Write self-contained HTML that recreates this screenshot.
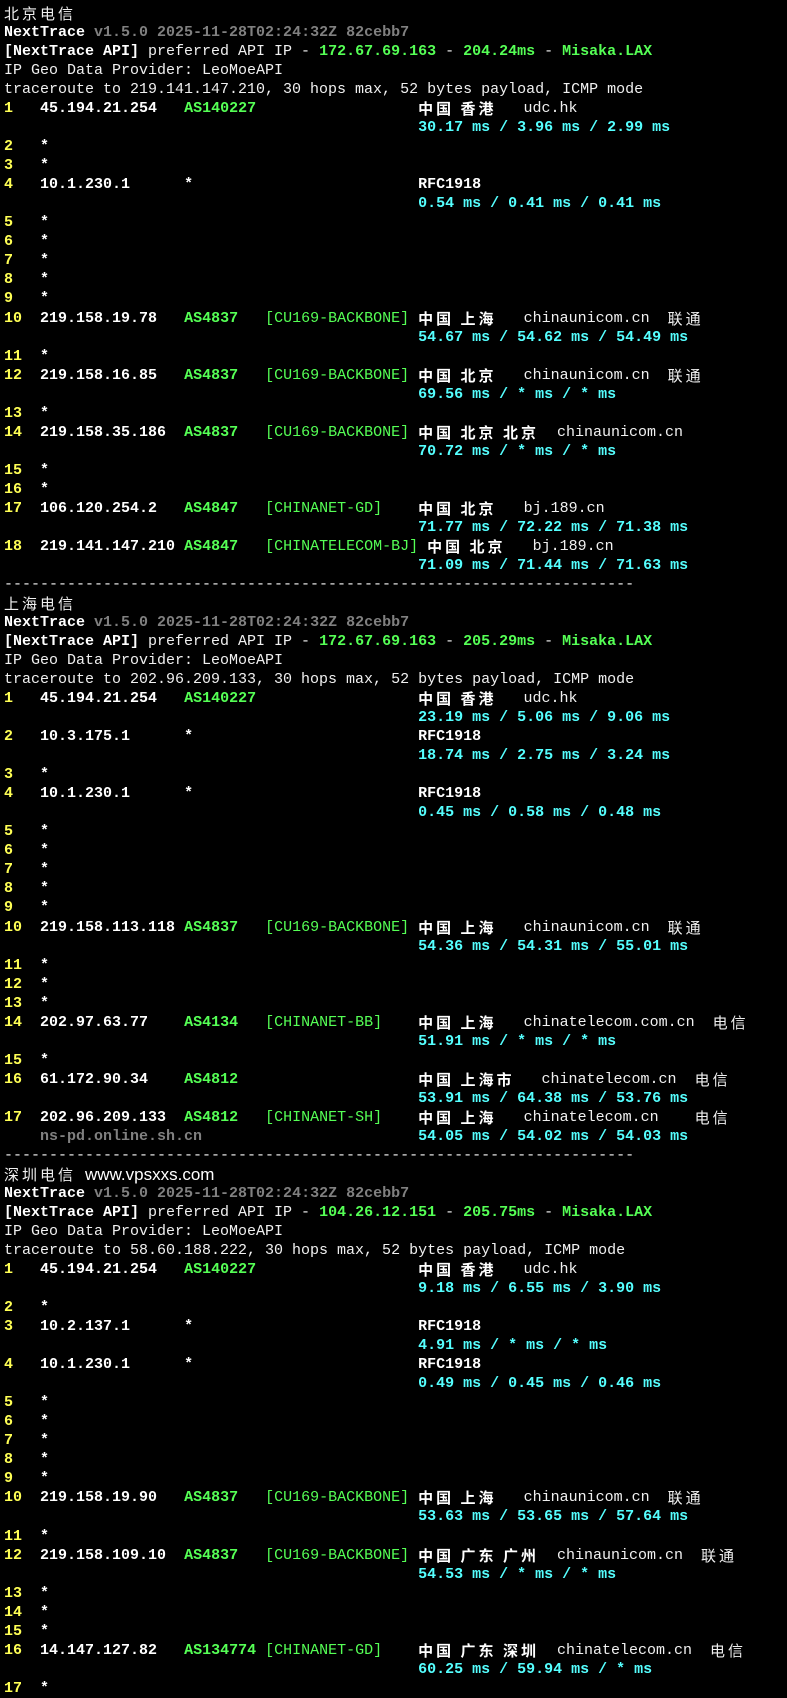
<!DOCTYPE html>
<html><head><meta charset="utf-8">
<style>
html,body{margin:0;padding:0;background:#000;}
body{width:787px;height:1689px;overflow:hidden;}
pre{margin:0;padding:4px 0 0 4px;font-family:"Liberation Mono",monospace;font-size:15px;line-height:19.03px;color:#f0f0f0;white-space:pre;}
.k{display:inline-block;height:19px;line-height:19px;vertical-align:top;letter-spacing:0.2em;font-family:"Noto Sans CJK SC","WenQuanYi Zen Hei",sans-serif;font-size:15px;}
b{font-weight:bold;color:#fff}
.y{color:#ffff55;font-weight:bold}
.g{color:#55ff55;font-weight:bold}
.t{color:#55ff55}
.c{color:#55ffff;font-weight:bold}
.d{color:#808080;font-weight:bold}
.w{display:inline-block;height:19px;line-height:19px;vertical-align:top;font-family:"Liberation Sans",sans-serif;font-size:17px;color:#fff;}
</style></head><body>
<pre><span class="k">北京电信</span>
<b>NextTrace</b> <span class="d">v1.5.0 2025-11-28T02:24:32Z 82cebb7</span>
<b>[NextTrace API]</b> preferred API IP - <span class="g">172.67.69.163</span> - <span class="g">204.24ms</span> - <span class="g">Misaka.LAX</span>
IP Geo Data Provider: LeoMoeAPI
traceroute to 219.141.147.210, 30 hops max, 52 bytes payload, ICMP mode
<span class="y">1</span>   <b>45.194.21.254</b>   <span class="g">AS140227</span>                  <b class="k">中国 香港</b>   udc.hk
                                              <span class="c">30.17 ms / 3.96 ms / 2.99 ms</span>
<span class="y">2</span>   <b>*</b>
<span class="y">3</span>   <b>*</b>
<span class="y">4</span>   <b>10.1.230.1</b>      <b>*</b>                         <b>RFC1918</b>
                                              <span class="c">0.54 ms / 0.41 ms / 0.41 ms</span>
<span class="y">5</span>   <b>*</b>
<span class="y">6</span>   <b>*</b>
<span class="y">7</span>   <b>*</b>
<span class="y">8</span>   <b>*</b>
<span class="y">9</span>   <b>*</b>
<span class="y">10</span>  <b>219.158.19.78</b>   <span class="g">AS4837</span>   <span class="t">[CU169-BACKBONE]</span> <b class="k">中国 上海</b>   chinaunicom.cn  <span class="k">联通</span>
                                              <span class="c">54.67 ms / 54.62 ms / 54.49 ms</span>
<span class="y">11</span>  <b>*</b>
<span class="y">12</span>  <b>219.158.16.85</b>   <span class="g">AS4837</span>   <span class="t">[CU169-BACKBONE]</span> <b class="k">中国 北京</b>   chinaunicom.cn  <span class="k">联通</span>
                                              <span class="c">69.56 ms / * ms / * ms</span>
<span class="y">13</span>  <b>*</b>
<span class="y">14</span>  <b>219.158.35.186</b>  <span class="g">AS4837</span>   <span class="t">[CU169-BACKBONE]</span> <b class="k">中国 北京 北京</b>  chinaunicom.cn
                                              <span class="c">70.72 ms / * ms / * ms</span>
<span class="y">15</span>  <b>*</b>
<span class="y">16</span>  <b>*</b>
<span class="y">17</span>  <b>106.120.254.2</b>   <span class="g">AS4847</span>   <span class="t">[CHINANET-GD]</span>    <b class="k">中国 北京</b>   bj.189.cn
                                              <span class="c">71.77 ms / 72.22 ms / 71.38 ms</span>
<span class="y">18</span>  <b>219.141.147.210</b> <span class="g">AS4847</span>   <span class="t">[CHINATELECOM-BJ]</span> <b class="k">中国 北京</b>   bj.189.cn
                                              <span class="c">71.09 ms / 71.44 ms / 71.63 ms</span>
----------------------------------------------------------------------
<span class="k">上海电信</span>
<b>NextTrace</b> <span class="d">v1.5.0 2025-11-28T02:24:32Z 82cebb7</span>
<b>[NextTrace API]</b> preferred API IP - <span class="g">172.67.69.163</span> - <span class="g">205.29ms</span> - <span class="g">Misaka.LAX</span>
IP Geo Data Provider: LeoMoeAPI
traceroute to 202.96.209.133, 30 hops max, 52 bytes payload, ICMP mode
<span class="y">1</span>   <b>45.194.21.254</b>   <span class="g">AS140227</span>                  <b class="k">中国 香港</b>   udc.hk
                                              <span class="c">23.19 ms / 5.06 ms / 9.06 ms</span>
<span class="y">2</span>   <b>10.3.175.1</b>      <b>*</b>                         <b>RFC1918</b>
                                              <span class="c">18.74 ms / 2.75 ms / 3.24 ms</span>
<span class="y">3</span>   <b>*</b>
<span class="y">4</span>   <b>10.1.230.1</b>      <b>*</b>                         <b>RFC1918</b>
                                              <span class="c">0.45 ms / 0.58 ms / 0.48 ms</span>
<span class="y">5</span>   <b>*</b>
<span class="y">6</span>   <b>*</b>
<span class="y">7</span>   <b>*</b>
<span class="y">8</span>   <b>*</b>
<span class="y">9</span>   <b>*</b>
<span class="y">10</span>  <b>219.158.113.118</b> <span class="g">AS4837</span>   <span class="t">[CU169-BACKBONE]</span> <b class="k">中国 上海</b>   chinaunicom.cn  <span class="k">联通</span>
                                              <span class="c">54.36 ms / 54.31 ms / 55.01 ms</span>
<span class="y">11</span>  <b>*</b>
<span class="y">12</span>  <b>*</b>
<span class="y">13</span>  <b>*</b>
<span class="y">14</span>  <b>202.97.63.77</b>    <span class="g">AS4134</span>   <span class="t">[CHINANET-BB]</span>    <b class="k">中国 上海</b>   chinatelecom.com.cn  <span class="k">电信</span>
                                              <span class="c">51.91 ms / * ms / * ms</span>
<span class="y">15</span>  <b>*</b>
<span class="y">16</span>  <b>61.172.90.34</b>    <span class="g">AS4812</span>                    <b class="k">中国 上海市</b>   chinatelecom.cn  <span class="k">电信</span>
                                              <span class="c">53.91 ms / 64.38 ms / 53.76 ms</span>
<span class="y">17</span>  <b>202.96.209.133</b>  <span class="g">AS4812</span>   <span class="t">[CHINANET-SH]</span>    <b class="k">中国 上海</b>   chinatelecom.cn    <span class="k">电信</span>
    <span class="d">ns-pd.online.sh.cn</span>                        <span class="c">54.05 ms / 54.02 ms / 54.03 ms</span>
----------------------------------------------------------------------
<span class="k">深圳电信</span> <span class="w">www.vpsxxs.com</span>
<b>NextTrace</b> <span class="d">v1.5.0 2025-11-28T02:24:32Z 82cebb7</span>
<b>[NextTrace API]</b> preferred API IP - <span class="g">104.26.12.151</span> - <span class="g">205.75ms</span> - <span class="g">Misaka.LAX</span>
IP Geo Data Provider: LeoMoeAPI
traceroute to 58.60.188.222, 30 hops max, 52 bytes payload, ICMP mode
<span class="y">1</span>   <b>45.194.21.254</b>   <span class="g">AS140227</span>                  <b class="k">中国 香港</b>   udc.hk
                                              <span class="c">9.18 ms / 6.55 ms / 3.90 ms</span>
<span class="y">2</span>   <b>*</b>
<span class="y">3</span>   <b>10.2.137.1</b>      <b>*</b>                         <b>RFC1918</b>
                                              <span class="c">4.91 ms / * ms / * ms</span>
<span class="y">4</span>   <b>10.1.230.1</b>      <b>*</b>                         <b>RFC1918</b>
                                              <span class="c">0.49 ms / 0.45 ms / 0.46 ms</span>
<span class="y">5</span>   <b>*</b>
<span class="y">6</span>   <b>*</b>
<span class="y">7</span>   <b>*</b>
<span class="y">8</span>   <b>*</b>
<span class="y">9</span>   <b>*</b>
<span class="y">10</span>  <b>219.158.19.90</b>   <span class="g">AS4837</span>   <span class="t">[CU169-BACKBONE]</span> <b class="k">中国 上海</b>   chinaunicom.cn  <span class="k">联通</span>
                                              <span class="c">53.63 ms / 53.65 ms / 57.64 ms</span>
<span class="y">11</span>  <b>*</b>
<span class="y">12</span>  <b>219.158.109.10</b>  <span class="g">AS4837</span>   <span class="t">[CU169-BACKBONE]</span> <b class="k">中国 广东 广州</b>  chinaunicom.cn  <span class="k">联通</span>
                                              <span class="c">54.53 ms / * ms / * ms</span>
<span class="y">13</span>  <b>*</b>
<span class="y">14</span>  <b>*</b>
<span class="y">15</span>  <b>*</b>
<span class="y">16</span>  <b>14.147.127.82</b>   <span class="g">AS134774</span> <span class="t">[CHINANET-GD]</span>    <b class="k">中国 广东 深圳</b>  chinatelecom.cn  <span class="k">电信</span>
                                              <span class="c">60.25 ms / 59.94 ms / * ms</span>
<span class="y">17</span>  <b>*</b>
</pre>
</body></html>
